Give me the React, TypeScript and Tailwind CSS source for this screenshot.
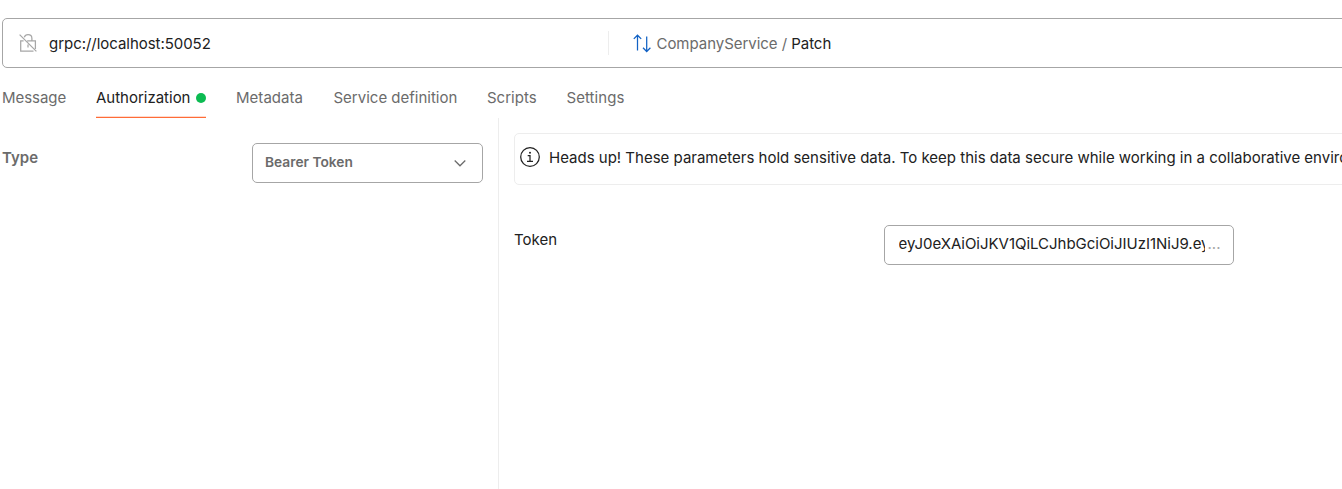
const UrlBar = () => (
  <div className="ml-0.5 mt-[18px] flex h-[50px] w-[1350px] shrink-0 items-center rounded-[5px] border border-[#a6a6a6]">
    <div className="flex w-[605px] items-center">
      <svg className="ml-[15px] h-5 w-5 shrink-0" viewBox="0 0 20 20" fill="none" stroke="#a6a6a6" strokeWidth="1.25">
        <path d="M6.3 4.3C6.9 2.4 8.3 1.6 10 1.6c2.3 0 3.9 1.6 3.9 3.8v2.4M9.2 7.9h8.2v8.2M5.6 7.9H2.7v10.2h12.8M10 11.5v3M1.6 1.6l16.8 16.8" />
      </svg>
      <span className="ml-[11px] mt-0.5 tracking-[-0.04px] text-[#212121]">grpc://localhost:50052</span>
    </div>
    <div className="h-6 w-px bg-[#ededed]" />
    <svg className="-mt-px ml-[23px] h-5 w-5 shrink-0" viewBox="0 0 20 20" fill="none" stroke="#1262c4" strokeWidth="1.25">
      <path d="M5.5 17.5V2.2M1.8 5.9l3.7-3.7 3.7 3.7M14.7 3.5v15M11 14.8l3.7 3.7 3.7-3.7" />
    </svg>
    <span className="ml-[4.5px] mt-0.5 whitespace-pre tracking-[-0.04px] text-[#6b6b6b]">
      CompanyService / <span className="text-[#212121]">Patch</span>
    </span>
  </div>
);

const Tabs = () => (
  <nav className="ml-0.5 flex h-[50px] shrink-0 pt-[10px] text-[#6b6b6b]">
    <span className="h-10 w-[94px] leading-10 tracking-[-0.04px]">Message</span>
    <div className="mr-[30px] flex h-10 w-[110px] flex-col">
      <div className="flex h-[38px] items-center justify-between pt-[3px] tracking-[-0.01px] text-[#212121]">
        Authorization
        <i className="-mt-0.5 h-[10px] w-[10px] rounded-full bg-[#0cbb52]" />
      </div>
      <div className="h-px bg-[#ffdacd]" />
      <div className="h-px bg-[#ff6c37]" />
    </div>
    <span className="h-10 w-[97.5px] leading-10 tracking-[0.04px]">Metadata</span>
    <span className="h-10 w-[153.5px] leading-10">Service definition</span>
    <span className="h-10 w-[79.5px] leading-10">Scripts</span>
    <span className="h-10 leading-10 tracking-[0.06px]">Settings</span>
  </nav>
);

const TypePanel = () => (
  <section className="flex w-[499px] shrink-0 items-start border-r border-[#ededed] pl-0.5 pt-[25px]">
    <span className="mt-[5px] w-[250px] font-semibold leading-5 text-[#6b6b6b]">Type</span>
    <div className="flex h-10 w-[231px] items-center justify-between rounded-[5px] border border-[#a6a6a6] pl-3 pr-[15px] text-[13.75px] font-semibold text-[#6b6b6b]">
      <span className="-mt-0.5">Bearer Token</span>
      <svg className="-mt-px h-[15px] w-[15px]" viewBox="0 0 15 15" fill="none" stroke="#6b6b6b" strokeWidth="1.25">
        <path d="M2.7 5.5l5.3 5.3 5.3-5.3" />
      </svg>
    </div>
  </section>
);

const TokenPanel = () => (
  <section className="flex w-[1000px] shrink-0 flex-col pl-[15px] pt-[15px]">
    <div className="flex h-[52px] rounded-[5px] border border-[#ededed] pl-[5px] pt-[13px] text-[#212121]">
      <svg className="h-5 w-5 shrink-0" viewBox="0 0 20 20" fill="none" stroke="#212121" strokeWidth="1.25">
        <circle cx="10" cy="10" r="9.3" />
        <path d="M7.7 8.5H10v5.8M7 14.4h6" />
        <circle cx="10" cy="5.8" r="1" fill="#212121" stroke="none" />
      </svg>
      <span className="ml-[9px] mt-px whitespace-nowrap leading-5">
        Heads up! These parameters hold sensitive data. To keep this data secure while working in a collaborative environment
      </span>
    </div>
    <div className="mt-10 flex">
      <span className="mt-[5px] w-[370px] leading-5 text-[#212121]">Token</span>
      <div className="flex h-10 w-[350px] rounded-[5px] border border-[#a6a6a6] pl-[13.5px] leading-[36px] text-[#212121]">
        <span className="w-[306.5px] overflow-hidden whitespace-nowrap tracking-[-0.02px]">eyJ0eXAiOiJKV1QiLCJhbGciOiJIUzI1NiJ9.ey</span>
        <span className="ml-[2.5px] text-[#a6a6a6]">...</span>
      </div>
    </div>
  </section>
);

export default function App() {
  return (
    <main className="flex h-[489px] w-full flex-col overflow-hidden bg-white font-['Inter',sans-serif] text-[15px]">
      <UrlBar />
      <Tabs />
      <div className="flex min-h-0 flex-1">
        <TypePanel />
        <TokenPanel />
      </div>
    </main>
  );
}
